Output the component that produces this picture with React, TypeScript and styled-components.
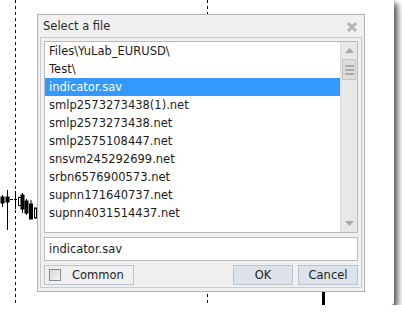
import React, { useState } from 'react';
import styled, { createGlobalStyle } from 'styled-components';

const files = [
  'Files\\YuLab_EURUSD\\',
  'Test\\',
  'indicator.sav',
  'smlp2573273438(1).net',
  'smlp2573273438.net',
  'smlp2575108447.net',
  'snsvm245292699.net',
  'srbn6576900573.net',
  'supnn171640737.net',
  'supnn4031514437.net',
];

const GlobalStyle = createGlobalStyle`
  html, body {
    margin: 0;
    padding: 0;
    background: #ffffff;
  }
  * {
    box-sizing: border-box;
  }
`;

function App() {
  const [selected, setSelected] = useState(2);
  const [common, setCommon] = useState(false);

  return (
    <>
      <GlobalStyle />
      <Screen>
        <Chart>
          <GridLine $x={15} />
          <GridLine $x={207} />
          <Candles width="40" height="50" viewBox="0 0 40 50">
            <g stroke="#000" strokeWidth="1" fill="#fff">
              <line x1="2.5" y1="10" x2="2.5" y2="22" />
              <rect x="1" y="12" width="3" height="6" fill="#000" />
              <line x1="7.5" y1="5" x2="7.5" y2="45" />
              <rect x="6" y="12" width="3" height="5" fill="#000" />
              <line x1="10" y1="14.5" x2="13" y2="14.5" />
              <line x1="15.5" y1="6" x2="15.5" y2="24" />
              <line x1="14" y1="14.5" x2="17" y2="14.5" />
              <rect x="18.5" y="12.5" width="3" height="8" />
              <line x1="22.5" y1="8" x2="22.5" y2="28" />
              <rect x="21" y="10" width="3" height="14" fill="#000" />
              <line x1="26.5" y1="14" x2="26.5" y2="30" />
              <rect x="25" y="16" width="3" height="12" fill="#000" />
              <line x1="31" y1="15" x2="31" y2="34" />
              <rect x="29.5" y="19" width="3" height="15" fill="#000" />
              <rect x="34.5" y="23" width="2" height="10" />
            </g>
          </Candles>
          <Tick />
        </Chart>

        <Dialog>
          <TitleBar>
            <Title>Select a file</Title>
            <CloseIcon width="12" height="12" viewBox="0 0 12 12">
              <path d="M2 2 L10 10 M10 2 L2 10" stroke="#a6a6a6" strokeWidth="2.6" />
              <path d="M2 2 L10 10 M10 2 L2 10" stroke="#cfcfcf" strokeWidth="0.8" />
            </CloseIcon>
          </TitleBar>
          <Client>
            <ListBox>
              <Rows>
                {files.map((name, i) => (
                  <Row key={name} $active={i === selected} onClick={() => setSelected(i)}>
                    {name}
                  </Row>
                ))}
              </Rows>
              <ScrollBar>
                <ArrowButton>
                  <svg width="9" height="5" viewBox="0 0 9 5">
                    <path d="M0 5 L4.5 0 L9 5 Z" fill="#a8a8a8" />
                  </svg>
                </ArrowButton>
                <Thumb>
                  <ThumbLine />
                  <ThumbLine />
                  <ThumbLine />
                </Thumb>
                <Track />
                <ArrowButton>
                  <svg width="9" height="5" viewBox="0 0 9 5">
                    <path d="M0 0 L4.5 5 L9 0 Z" fill="#a8a8a8" />
                  </svg>
                </ArrowButton>
              </ScrollBar>
            </ListBox>
            <NameInput value={files[selected]} readOnly />
            <BottomRow>
              <CommonBox onClick={() => setCommon(!common)}>
                <CheckBox $checked={common} />
                Common
              </CommonBox>
              <Spacer />
              <Button>OK</Button>
              <Button>Cancel</Button>
            </BottomRow>
          </Client>
        </Dialog>
      </Screen>
    </>
  );
}

export default App;

const Screen = styled.div`
  position: relative;
  width: 394px;
  height: 305px;
  background: #ffffff;
  border-bottom-right-radius: 3px;
  box-shadow: 3px 3px 5px rgba(0, 0, 0, 0.55), 6px 6px 6px rgba(0, 0, 0, 0.2);
  overflow: visible;
  font-family: 'DejaVu Sans', Verdana, sans-serif;
  font-size: 11.5px;
  color: #1c1c1c;
`;

const Chart = styled.div`
  position: absolute;
  inset: 0;
  overflow: hidden;
`;

const GridLine = styled.div<{ $x: number }>`
  position: absolute;
  top: 0;
  bottom: 0;
  left: ${({ $x }) => $x}px;
  width: 1px;
  background: repeating-linear-gradient(to bottom, #000 0 3px, transparent 3px 6px);
`;

const Candles = styled.svg`
  position: absolute;
  left: 0;
  top: 185px;
`;

const Tick = styled.div`
  position: absolute;
  left: 322px;
  top: 292px;
  width: 3px;
  height: 13px;
  background: #000;
`;

const Dialog = styled.div`
  position: absolute;
  left: 37px;
  top: 14px;
  width: 328px;
  height: 278px;
  display: flex;
  flex-direction: column;
  padding: 0 2px 3px 2px;
  background: #f0f0f0;
  border: 1px solid #b3b3b3;
`;

const TitleBar = styled.div`
  height: 22px;
  display: flex;
  align-items: center;
  justify-content: space-between;
  padding: 0 4px 0 3px;
`;

const Title = styled.span`
  color: #2b2b2b;
`;

const CloseIcon = styled.svg`
  margin-top: 2px;
`;

const Client = styled.div`
  flex: 1;
  display: flex;
  flex-direction: column;
  gap: 4px;
  padding: 3px 3px 2px 3px;
  border: 1px solid #cbcbcb;
`;

const ListBox = styled.div`
  height: 192px;
  display: flex;
  background: #ffffff;
  border: 1px solid #b6bcc2;
`;

const Rows = styled.div`
  flex: 1;
  display: flex;
  flex-direction: column;
`;

const Row = styled.div<{ $active?: boolean }>`
  height: 18px;
  line-height: 18px;
  padding-left: 4px;
  white-space: nowrap;
  cursor: default;
  color: ${({ $active }) => ($active ? '#ffffff' : '#1c1c1c')};
  background: ${({ $active }) => ($active ? '#3399ff' : 'transparent')};
`;

const ScrollBar = styled.div`
  width: 17px;
  display: flex;
  flex-direction: column;
  background: #e8e8e8;
  border-left: 1px solid #dadada;
`;

const ArrowButton = styled.div`
  height: 17px;
  display: flex;
  align-items: center;
  justify-content: center;
`;

const Thumb = styled.div`
  height: 21px;
  margin: 0 1px;
  display: flex;
  flex-direction: column;
  align-items: center;
  justify-content: center;
  gap: 2px;
  background: #dcdcdc;
  border: 1px solid #c4c4c4;
`;

const ThumbLine = styled.div`
  width: 9px;
  height: 2px;
  background: #a9a9a9;
`;

const Track = styled.div`
  flex: 1;
`;

const NameInput = styled.input`
  height: 24px;
  padding: 0 4px;
  border: 1px solid #b6bcc2;
  background: #ffffff;
  font: inherit;
  color: #1c1c1c;
  outline: none;
`;

const BottomRow = styled.div`
  height: 20px;
  display: flex;
  gap: 5px;
`;

const CommonBox = styled.label`
  width: 90px;
  display: flex;
  align-items: center;
  gap: 11px;
  padding-left: 4px;
  border: 1px solid #b9c4ce;
  cursor: default;
`;

const CheckBox = styled.span<{ $checked?: boolean }>`
  width: 12px;
  height: 12px;
  border: 1px solid #8c8c8c;
  background: ${({ $checked }) =>
    $checked ? '#3399ff' : 'linear-gradient(135deg, #d8d8d8, #f4f4f4)'};
`;

const Spacer = styled.div`
  flex: 1;
`;

const Button = styled.button`
  width: 60px;
  height: 20px;
  padding: 0;
  font: inherit;
  color: #1c1c1c;
  background: #dde3ea;
  border: 1px solid #b9c4ce;
  cursor: default;
`;
